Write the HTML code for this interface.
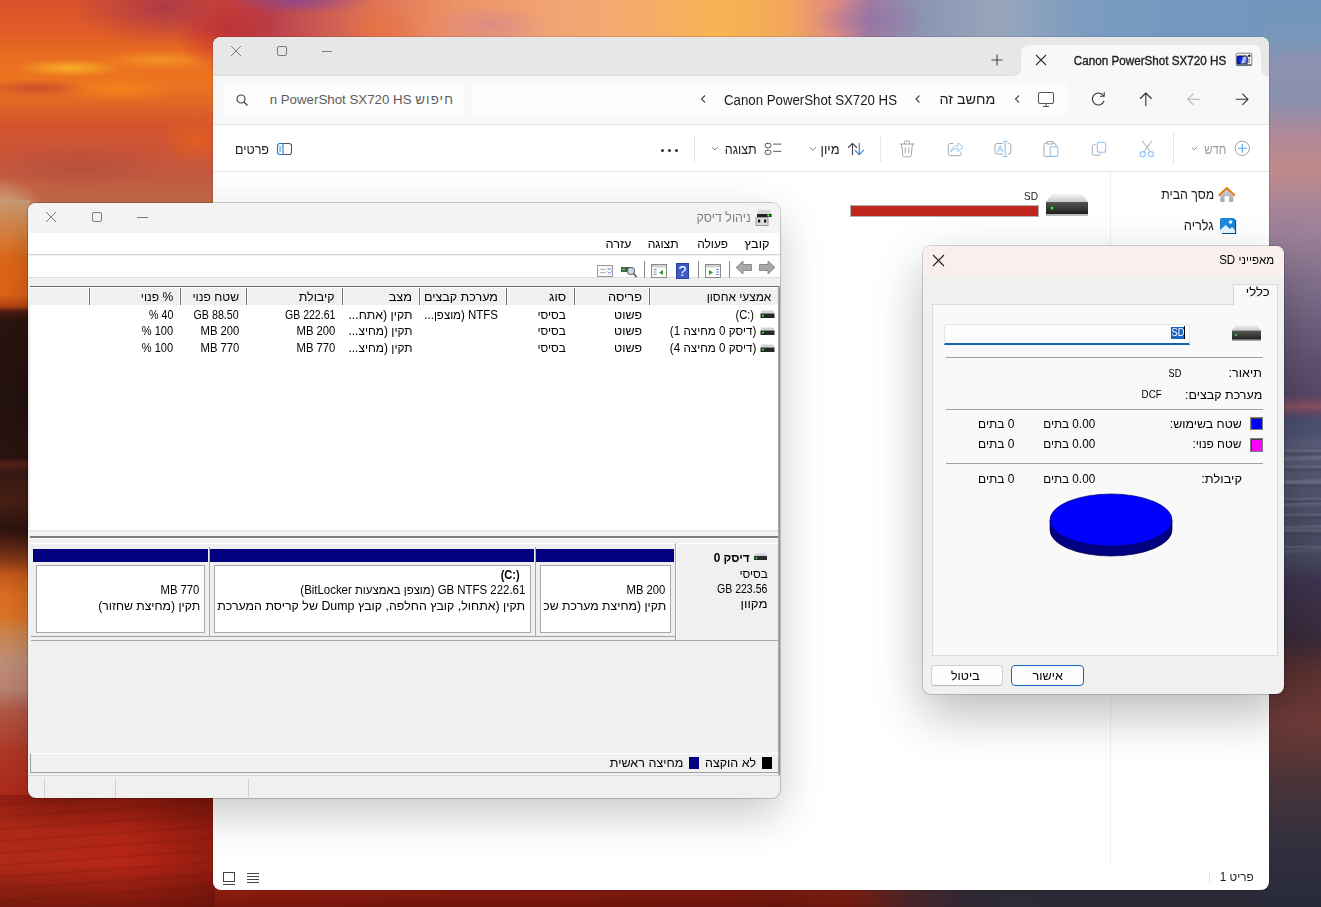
<!DOCTYPE html>
<html><head><meta charset="utf-8">
<style>
*{margin:0;padding:0;box-sizing:border-box}
html,body{width:1321px;height:907px;overflow:hidden;font-family:"Liberation Sans",sans-serif;color:#1a1a1a}
.a{position:absolute}
.t{position:absolute;white-space:nowrap;line-height:1}
.r{direction:rtl}
#bg{left:0;top:0;width:1321px;height:907px;overflow:hidden}
</style></head><body>
<div id="bg" class="a">
  <div class="a" style="left:0;top:0;width:1321px;height:907px;background:linear-gradient(90deg,#d85030 0px,#cc4434 150px,#c44238 215px,#b8404a 270px,#cc5a52 320px,#e07656 380px,#ec9468 460px,#f2a474 560px,#f4ac6c 640px,#f6b452 720px,#f2a65c 790px,#e08a80 835px,#a07aa0 870px,#8c94b2 920px,#98a6bc 1000px,#7c9cc0 1080px,#7298be 1200px,#7096be 1321px)"></div>
  <div class="a" style="left:0;top:0;width:1321px;height:40px;background:radial-gradient(ellipse 70px 12px at 300px 2px,rgba(130,70,160,.7),rgba(130,70,160,0)),radial-gradient(ellipse 60px 20px at 490px 25px,rgba(210,130,150,.6),rgba(210,130,150,0)),radial-gradient(ellipse 50px 30px at 230px 25px,rgba(190,40,50,.6),rgba(190,40,50,0)),radial-gradient(ellipse 40px 30px at 380px 30px,rgba(240,110,50,.5),rgba(240,110,50,0)),radial-gradient(ellipse 60px 20px at 870px 20px,rgba(140,110,170,.5),rgba(140,110,170,0))"></div>
  <!-- left sky -->
  <div class="a" style="left:0;top:0;width:215px;height:210px;background:radial-gradient(ellipse 90px 38px at 165px 8px,rgba(160,50,80,.75),rgba(160,50,80,0)),radial-gradient(ellipse 40px 40px at 215px 30px,rgba(195,45,50,.8),rgba(195,45,50,0)),radial-gradient(ellipse 55px 9px at 70px 68px,rgba(255,200,40,.7),rgba(255,200,40,0)),radial-gradient(ellipse 60px 10px at 160px 60px,rgba(255,175,40,.55),rgba(255,175,40,0)),radial-gradient(ellipse 60px 12px at 120px 90px,rgba(255,150,20,.5),rgba(255,150,20,0)),radial-gradient(ellipse 55px 9px at 35px 88px,rgba(175,55,50,.55),rgba(175,55,50,0)),radial-gradient(ellipse 35px 25px at 195px 140px,rgba(240,100,20,.55),rgba(240,100,20,0)),radial-gradient(ellipse 90px 22px at 80px 165px,rgba(165,70,60,.45),rgba(165,70,60,0)),radial-gradient(ellipse 45px 35px at 0px 212px,rgba(215,180,145,.95),rgba(215,180,145,0)),linear-gradient(180deg,#d8502e 0,#e25e26 35px,#ea7020 60px,#ec7420 80px,#e06626 105px,#d4542e 125px,#cc5436 150px,#c25a40 175px,#c46a48 200px,#c47450 210px)"></div>
  <!-- left strip -->
  <div class="a" style="left:0;top:200px;width:30px;height:600px;background:linear-gradient(180deg,#c89a78 0px,#cc9060 12px,#d8803c 35px,#e06818 60px,#e06418 95px,#b84414 106px,#4a1c12 112px,#2a140f 122px,#24120e 200px,#2c1410 258px,#5a2418 264px,#381a14 272px,#4a2014 300px,#2e1410 330px,#5a2414 345px,#8a3a16 360px,#c85a1c 375px,#e07020 395px,#e07424 415px,#d08850 435px,#c49078 460px,#bc8474 490px,#b45a48 510px,#b43a28 550px,#b02818 600px)"></div>
  <!-- bottom area -->
  <div class="a" style="left:0;top:795px;width:1321px;height:112px;background:linear-gradient(90deg,#b02a18 0px,#b82616 150px,#a82214 400px,#9a2012 700px,#8a2214 850px,#4a2a30 910px,#2e2a36 970px,#2a2a38 1321px)"></div>
  <div class="a" style="left:0;top:795px;width:1000px;height:112px;background:linear-gradient(180deg,rgba(90,10,5,.35) 0,rgba(0,0,0,0) 35px,rgba(0,0,0,0) 70px,rgba(60,8,4,.3) 95px,rgba(50,6,4,.45) 112px);-webkit-mask-image:linear-gradient(90deg,#000 780px,rgba(0,0,0,0) 1000px);mask-image:linear-gradient(90deg,#000 780px,rgba(0,0,0,0) 1000px)"></div>
  <div class="a" style="left:0;top:795px;width:215px;height:112px;background:linear-gradient(90deg,rgba(0,0,0,0) 120px,rgba(70,10,5,.3) 215px),repeating-linear-gradient(176deg,rgba(0,0,0,0) 0px,rgba(0,0,0,0) 8px,rgba(60,5,0,.12) 10px,rgba(0,0,0,0) 12px)"></div>
  <!-- right strip -->
  <div class="a" style="left:1262px;top:0;width:59px;height:907px;background:linear-gradient(180deg,#7196bd 0px,#7896b8 40px,#8c92b2 60px,#8890b0 100px,#b08898 135px,#c08a88 170px,#a88498 205px,#9a8098 235px,#7a6a88 300px,#625272 360px,#584868 395px,#8a5060 407px,#6a4a66 412px,#4a5070 420px,#505474 436px,#5a5a78 445px,#46485e 560px,#3e3450 580px,#3a2a3a 640px,#5a3030 670px,#6e3a38 720px,#5e3636 750px,#4a3438 780px,#33303e 840px,#282a38 907px)"></div>
  <div class="a" style="left:1262px;top:440px;width:59px;height:120px;background:repeating-linear-gradient(180deg,rgba(255,255,255,0) 0px,rgba(255,255,255,0) 9px,rgba(200,200,220,.18) 11px,rgba(30,30,50,.2) 13px,rgba(255,255,255,0) 16px),repeating-linear-gradient(178deg,rgba(255,255,255,0) 0px,rgba(255,255,255,0) 17px,rgba(220,220,235,.15) 19px,rgba(255,255,255,0) 23px)"></div>
</div>
<!-- EXPLORER -->
<div id="ex" class="a" style="left:213px;top:37px;width:1056px;height:853px;border-radius:8px;overflow:hidden;background:#fff;box-shadow:0 0 0 1px rgba(0,0,0,.10)">
  <div class="a" style="left:0;top:0;width:1056px;height:39px;background:#e7e7e7"></div>
  <div class="a" style="left:0;top:38px;width:1056px;height:49px;background:#f8f8f8;border-top:1px solid #dedede"></div>
  <div class="a" style="left:0;top:87px;width:1056px;height:1px;background:#e3e3e3"></div>
  <div class="a" style="left:0;top:134px;width:1056px;height:1px;background:#e6e6e6"></div>
  <!-- window controls -->
  <svg class="a" style="left:0;top:0" width="140" height="39"><g stroke="#7c7c7c" stroke-width="1" fill="none">
    <path d="M18 9 L28 19 M28 9 L18 19"/>
    <rect x="64.5" y="9.5" width="9" height="9" rx="1.5"/>
    <path d="M109 14.5 H119"/></g></svg>
  <!-- tab -->
  <div class="a" style="left:808px;top:8px;width:240px;height:32px;background:#f8f8f8;border-radius:8px 8px 0 0"></div>
  <div class="a" style="left:800px;top:31px;width:8px;height:8px;background:radial-gradient(circle at 0 0,#e7e7e7 8px,#f8f8f8 8.5px)"></div>
  <div class="a" style="left:1048px;top:31px;width:8px;height:8px;background:radial-gradient(circle at 8px 0,#e7e7e7 8px,#f8f8f8 8.5px)"></div>
  <svg class="a" style="left:1022px;top:15px" width="18" height="15"><defs><linearGradient id="camg" x1="0" y1="0" x2="1" y2="0.3"><stop offset="0" stop-color="#0010e0"/><stop offset="0.5" stop-color="#0a2ad8"/><stop offset="0.7" stop-color="#c8d0ff"/><stop offset="1" stop-color="#6a80f0"/></linearGradient></defs><rect x="1.2" y="1.2" width="15.6" height="12.4" rx="1.2" fill="#f2f2f2" stroke="#6a7688" stroke-width="0.9"/><rect x="2.2" y="4" width="10" height="8" rx="1" fill="url(#camg)" stroke="#111" stroke-width="1"/><rect x="13.3" y="2.8" width="2" height="2" fill="#000"/><path d="M14 6.5 V11" stroke="#777" stroke-width="1.2"/><rect x="1.5" y="12.2" width="15" height="1.5" fill="#5a6a80"/></svg>
  <div class="t" style="right:43px;top:18px;font-size:12.5px;color:#1c1c1c;-webkit-text-stroke:0.35px #1c1c1c;transform-origin:right;transform:scaleX(0.9339)">Canon PowerShot SX720 HS</div>
  <svg class="a" style="left:822px;top:17px" width="12" height="12"><path d="M1 1 L11 11 M11 1 L1 11" stroke="#333" stroke-width="1.1"/></svg>
  <svg class="a" style="left:778px;top:17px" width="12" height="12"><path d="M6 0.5 V11.5 M0.5 6 H11.5" stroke="#444" stroke-width="1.1"/></svg>
  <!-- nav buttons -->
  <svg class="a" style="left:860px;top:51.2px" width="180" height="22" fill="none" stroke-linecap="round" stroke-linejoin="round">
    <path d="M163.2 11.3 H175 M169.6 5.9 L175 11.3 L169.6 16.7" stroke="#333" stroke-width="1.1"/>
    <path d="M126.6 11.3 H114.8 M120.2 5.9 L114.8 11.3 L120.2 16.7" stroke="#b4b4b4" stroke-width="1.1"/>
    <path d="M72.8 17.4 V5 M67.3 10.5 L72.8 5 L78.3 10.5" stroke="#333" stroke-width="1.1"/>
    <path d="M30.3 7.6 A6 6 0 1 0 30.9 13.3" stroke="#333" stroke-width="1.1"/><path d="M31.2 4.6 V8.3 H27.5" stroke="#333" stroke-width="1.1"/>
  </svg>
  <!-- breadcrumb box -->
  <div class="a" style="left:259px;top:47px;width:596px;height:32px;background:#fdfdfd;border-radius:5px"></div>
  <svg class="a" style="left:824px;top:54px" width="19" height="17" fill="none" stroke="#555" stroke-width="1.1"><rect x="1.5" y="1.5" width="15" height="11" rx="1.5"/><path d="M6 15.5 H12 M9 12.5 V15.5"/></svg>
  <svg class="a" style="left:700px;top:56px" width="110" height="12" fill="none" stroke="#444" stroke-width="1.1"><path d="M106 2.5 L102.5 6 L106 9.5"/><path d="M6.5 2.5 L3 6 L6.5 9.5"/></svg>
  <svg class="a" style="left:480px;top:56px" width="20" height="12" fill="none" stroke="#444" stroke-width="1.1"><path d="M12 2.5 L8.5 6 L12 9.5"/></svg>
  <div class="t r" style="right:274px;top:55px;font-size:14px;color:#1c1c1c;transform-origin:right;transform:scaleX(1.0287)">מחשב זה</div>
  <div class="t" style="left:511px;top:56px;font-size:14px;color:#1c1c1c;transform-origin:left;transform:scaleX(0.9459)">Canon PowerShot SX720 HS</div>
  <!-- search box -->
  <div class="a" style="left:11px;top:47px;width:240px;height:32px;background:#fdfdfd;border-radius:5px;overflow:hidden">
    <div class="t r" style="right:10px;top:8.5px;font-size:13.3px;color:#5c5c5c"><span style="letter-spacing:1.1px">חיפוש</span> <span style="font-size:13.3px">Canon PowerShot SX720 HS</span></div>
    <div class="a" style="left:0;top:0;width:46px;height:32px;background:#fdfdfd"></div>
  </div>
  <svg class="a" style="left:23px;top:57px" width="13" height="12" fill="none" stroke="#444" stroke-width="1.2"><circle cx="5" cy="5" r="4"/><path d="M8 8 L11.5 11.5"/></svg>
  <!-- command bar -->
  <svg class="a" style="left:440px;top:95px" width="610" height="34" fill="none" stroke-linecap="round" stroke-linejoin="round">
    <circle cx="589.3" cy="16.3" r="7.2" stroke="#a0a0a0" stroke-width="1"/><path d="M589.3 12.3 V20.3 M585.3 16.3 H593.3" stroke="#5aa0e8" stroke-width="1.1"/>
    <path d="M539 15.5 L541.3 17.7 L543.6 15.5" stroke="#8a8a8a" stroke-width="1"/>
    <line x1="520.5" y1="1" x2="520.5" y2="32" stroke="#e6e6e6" stroke-linecap="butt"/>
    <path d="M489.5 9 L497.2 19.8 M498.8 9 L491 19.8" stroke="#a8a8a8" stroke-width="1"/><circle cx="489.7" cy="22.2" r="2.6" stroke="#90c4f2" stroke-width="1.1"/><circle cx="497.9" cy="22.2" r="2.6" stroke="#90c4f2" stroke-width="1.1"/>
    <rect x="444.3" y="10.2" width="8.4" height="10" rx="2" stroke="#90c4f2" stroke-width="1.1"/><path d="M442.5 12.8 A2 2 0 0 0 439.3 14.5 V21.3 A2 2 0 0 0 441.3 23.3 H446 A2 2 0 0 0 447.6 22" stroke="#a8a8a8" stroke-width="1"/>
    <path d="M394.5 11 H392.5 A1.5 1.5 0 0 0 391 12.5 V23 A1.5 1.5 0 0 0 392.5 24.5 H397 M400 11 H401.5 A1.5 1.5 0 0 0 403 12.5 V14.5 M394.5 9.5 H400 V12 H394.5 Z" stroke="#a8a8a8" stroke-width="1"/><rect x="397.2" y="14.8" width="7.6" height="9.6" rx="1.2" stroke="#90c4f2" stroke-width="1.1"/>
    <path d="M349.5 11.5 H344 A2 2 0 0 0 342 13.5 V20 A2 2 0 0 0 344 22 H349.5 M355 11.5 H355.8 A2 2 0 0 1 357.8 13.5 V20 A2 2 0 0 1 355.8 22 H355" stroke="#a8a8a8" stroke-width="1"/><path d="M352.2 9.3 V24.5 M350.2 9.3 H354.2 M350.2 24.5 H354.2" stroke="#90c4f2" stroke-width="1.1"/><path d="M344.6 20 L347.2 13.5 L349.8 20 M345.6 17.8 H348.8" stroke="#90c4f2" stroke-width="1"/>
    <path d="M300 11.5 H297.3 A2 2 0 0 0 295.3 13.5 V21.7 A2 2 0 0 0 297.3 23.7 H306 A2 2 0 0 0 308 21.7 V20" stroke="#a8a8a8" stroke-width="1"/><path d="M298 19.5 C298.8 15.5 301.5 13.8 305 13.8 V10.6 L310 15.2 L305 19.6 V16.6 C302 16.6 299.5 17.5 298 19.5 Z" stroke="#90c4f2" stroke-width="1"/>
    <path d="M246.8 12 H261 M251.5 12 V10 A1 1 0 0 1 252.5 9 H255.5 A1 1 0 0 1 256.5 10 V12 M248.5 12 L249.8 23.2 A1.8 1.8 0 0 0 251.6 24.8 H256.4 A1.8 1.8 0 0 0 258.2 23.2 L259.5 12 M252.3 15.8 V21 M255.7 15.8 V21" stroke="#a8a8a8" stroke-width="1"/>
    <line x1="227.5" y1="4" x2="227.5" y2="30" stroke="#e6e6e6" stroke-linecap="butt"/>
    <path d="M199.5 22.6 V11.3 M195.3 15.5 L199.5 11.3 L203.7 15.5" stroke="#444" stroke-width="1.1"/><path d="M206.3 11.3 V22.6 M202.1 18.4 L206.3 22.6 L210.5 18.4" stroke="#2a7fd8" stroke-width="1.1"/>
    <path d="M157 15.6 L159.8 18.3 L162.6 15.6" stroke="#777" stroke-width="1"/>
    <rect x="112" y="11.3" width="6" height="4.4" rx="2.2" stroke="#555" stroke-width="1"/><rect x="112" y="18.2" width="6" height="4.4" rx="2.2" stroke="#555" stroke-width="1"/><path d="M120.5 12.1 H128 M120.5 19.3 H128" stroke="#555" stroke-width="1"/>
    <path d="M59.3 15.5 L61.8 18 L64.3 15.5" stroke="#777" stroke-width="1"/>
    <line x1="41.5" y1="4" x2="41.5" y2="30" stroke="#e6e6e6" stroke-linecap="butt"/>
  </svg>
  <div class="a" style="left:448px;top:112px;width:3px;height:3px;border-radius:2px;background:#333"></div>
  <div class="a" style="left:455px;top:112px;width:3px;height:3px;border-radius:2px;background:#333"></div>
  <div class="a" style="left:462px;top:112px;width:3px;height:3px;border-radius:2px;background:#333"></div>
  <div class="t r" style="right:43px;top:105px;font-size:14px;color:#9a9a9a;transform-origin:right;transform:scaleX(0.8087)">חדש</div>
  <div class="t r" style="right:429px;top:105px;font-size:14px;color:#1c1c1c;transform-origin:right;transform:scaleX(0.9254)">מיון</div>
  <div class="t r" style="right:512px;top:105px;font-size:14px;color:#1c1c1c;transform-origin:right;transform:scaleX(0.8955)">תצוגה</div>
  <div class="t r" style="left:22px;top:105.5px;font-size:13.5px;color:#1c1c1c;transform-origin:left;transform:scaleX(0.9275)">פרטים</div>
  <svg class="a" style="left:63px;top:104px" width="18" height="16" fill="none"><path d="M7 2.5 H13 A2.5 2.5 0 0 1 15.5 5 V11 A2.5 2.5 0 0 1 13 13.5 H7" stroke="#555" stroke-width="1.1"/><path d="M7 2.5 H4 A2.5 2.5 0 0 0 1.5 5 V11 A2.5 2.5 0 0 0 4 13.5 H7 Z" stroke="#1a78d8" stroke-width="1.1"/><path d="M3.2 6 H5.2 M3.2 8 H5.2 M3.2 10 H5.2" stroke="#1a78d8" stroke-width="0.9"/></svg>
  <!-- nav pane -->
  <div class="a" style="left:897px;top:135px;width:1px;height:694px;background:#efefef"></div>
  <svg class="a" style="left:1004px;top:149px" width="20" height="17"><defs><linearGradient id="hb" x1="0" y1="0" x2="0" y2="1"><stop offset="0" stop-color="#d4d4d4"/><stop offset="1" stop-color="#a8a8a8"/></linearGradient></defs><path d="M3.2 8.2 L9.8 2.6 L16.4 8.2 V15 A1 1 0 0 1 15.4 16 H12 V11 A1 1 0 0 0 11 10 H8.6 A1 1 0 0 0 7.6 11 V16 H4.2 A1 1 0 0 1 3.2 15 Z" fill="url(#hb)"/><path d="M2.2 9.2 L9.8 2 L17.4 9.2" fill="none" stroke="#e8730c" stroke-width="1.8" stroke-linecap="round" stroke-linejoin="round"/></svg>
  <div class="t r" style="right:55px;top:150px;font-size:14px;color:#1c1c1c;transform-origin:right;transform:scaleX(0.8788)">מסך הבית</div>
  <svg class="a" style="left:1006px;top:180px" width="18" height="17"><rect x="1" y="1" width="15" height="15" rx="1.5" fill="#1e88d8"/><path d="M1 13 L6.5 8 L11 12 L13 10 L16 13 V16 H1 Z" fill="#e8f4ff"/><circle cx="11.5" cy="5" r="1.8" fill="#e8f4ff"/><path d="M16.5 3 V16.5 H3" stroke="#0b4f8a" stroke-width="1.2" fill="none"/></svg>
  <div class="t r" style="right:55px;top:181px;font-size:14px;color:#1c1c1c;transform-origin:right;transform:scaleX(0.9156)">גלריה</div>
  <!-- SD drive -->
  <svg class="a" style="left:832px;top:156px" width="44" height="24"><defs><linearGradient id="dtop" x1="0" y1="0" x2="0" y2="1"><stop offset="0" stop-color="#f4f4f4"/><stop offset="1" stop-color="#c8c8c8"/></linearGradient><linearGradient id="dbot" x1="0" y1="0" x2="0" y2="1"><stop offset="0" stop-color="#555"/><stop offset="1" stop-color="#1a1a1a"/></linearGradient></defs><path d="M7 1 H37 L43 9 H1 Z" fill="url(#dtop)"/><rect x="1" y="9" width="42" height="13" fill="url(#dbot)"/><rect x="1" y="21" width="42" height="2" fill="#bbb"/><circle cx="7" cy="15" r="1.5" fill="#3ce03c"/></svg>
  <div class="t" style="right:231px;top:153.5px;font-size:11.5px;color:#1c1c1c;transform-origin:right;transform:scaleX(0.8759)">SD</div>
  <div class="a" style="left:637px;top:168px;width:189px;height:12px;background:#c0281e;border:1px solid #b0b0b0"></div>
  <!-- status bar -->
  <svg class="a" style="left:9px;top:834px" width="40" height="15" fill="none" stroke="#444" stroke-width="1"><rect x="1.5" y="1.5" width="11" height="9"/><path d="M1 13.5 H13"/><path d="M25 2.5 H37 M25 5.5 H37 M25 8.5 H37 M25 11.5 H37"/></svg>
  <div class="a" style="left:996px;top:835px;width:1px;height:11px;background:#e5e5e5"></div>
  <div class="t r" style="right:15px;top:834px;font-size:12px;color:#1c1c1c;transform-origin:right;transform:scaleX(0.9797)">פריט 1</div>
</div>

<!-- DISK MGMT -->
<div id="dm" class="a" style="left:28px;top:203px;width:752px;height:595px;border-radius:8px;overflow:hidden;background:#f0f0f0;box-shadow:0 0 0 1px rgba(0,0,0,.18),0 16px 44px rgba(0,0,0,.22)">
  <div class="a" style="left:0;top:0;width:752px;height:30px;background:#f3f3f3"></div>
  <svg class="a" style="left:0;top:0" width="140" height="30"><g stroke="#7c7c7c" stroke-width="1" fill="none">
    <path d="M18 9 L28 19 M28 9 L18 19"/>
    <rect x="64.5" y="9.5" width="9" height="9" rx="1.5"/>
    <path d="M109 14.5 H120"/></g></svg>
  <svg class="a" style="left:727px;top:6px" width="18" height="18"><path d="M3.5 1 H15 L16.5 5 H2 Z" fill="#d4d8dc"/><rect x="2" y="5" width="14.5" height="3" fill="#222"/><circle cx="13.5" cy="6.5" r="1.2" fill="#3f3"/><rect x="1" y="8.5" width="12" height="8" fill="#dcdcdc" stroke="#8a8a8a" stroke-width="0.8"/><rect x="3" y="10.5" width="2.2" height="3" fill="#111"/><rect x="9" y="10.5" width="2.2" height="3" fill="#111"/></svg>
<div class="t r" style="right:29px;top:8.2px;font-size:13px;color:#808080;transform-origin:right;transform:scaleX(0.9558)">ניהול דיסק</div>
  <div class="a" style="left:0;top:30px;width:752px;height:22px;background:#fff;border-bottom:1px solid #d6d6d6"></div>
<div class="t r" style="right:10.4px;top:34.5px;font-size:12px;color:#000;transform-origin:right;transform:scaleX(1.0588)">קובץ</div>
<div class="t r" style="right:52px;top:34.5px;font-size:12px;color:#000;transform-origin:right;transform:scaleX(0.9950)">פעולה</div>
<div class="t r" style="right:101px;top:34.5px;font-size:12px;color:#000;transform-origin:right;transform:scaleX(1.0117)">תצוגה</div>
<div class="t r" style="right:148px;top:34.5px;font-size:12px;color:#000;transform-origin:right;transform:scaleX(1.0599)">עזרה</div>
  <div class="a" style="left:0;top:53px;width:752px;height:22px;background:#fff;border-bottom:1px solid #dedede"></div>
  <div class="a" style="left:0;top:76px;width:752px;height:7px;background:#f0f0f0"></div>
  <svg class="a" style="left:566px;top:56px" width="186" height="20">
    <path d="M181 8.5 L174 2 V5.5 H165.5 V11.5 H174 V15 Z" fill="#a8a8a8" stroke="#7a7a7a" stroke-width="0.8"/>
    <path d="M142 8.5 L149 2 V5.5 H157.5 V11.5 H149 V15 Z" fill="#a8a8a8" stroke="#7a7a7a" stroke-width="0.8"/>
    <line x1="135.5" y1="2" x2="135.5" y2="19" stroke="#8a8a8a"/>
    <rect x="111.5" y="5.5" width="15" height="13" fill="#fff" stroke="#8a8a8a"/><rect x="112" y="6" width="14" height="2.5" fill="#d0d0d0"/><path d="M115 11 L119 13.5 L115 16 Z" fill="#2a9a2a"/><path d="M122 10.5 H125 M122 13 H125 M122 15.5 H125" stroke="#6a8acc" stroke-width="1"/>
    <line x1="104.5" y1="2" x2="104.5" y2="19" stroke="#8a8a8a"/>
    <rect x="82" y="4" width="13" height="16" fill="#3a5cc8"/><rect x="82.5" y="4.5" width="12" height="15" fill="none" stroke="#2a3e9a"/><text x="88.5" y="17" font-family="Liberation Sans" font-size="14" fill="#fff" text-anchor="middle">?</text>
    <rect x="57.5" y="5.5" width="15" height="13" fill="#fff" stroke="#8a8a8a"/><rect x="58" y="6" width="14" height="2.5" fill="#d0d0d0"/><path d="M69 11 L65 13.5 L69 16 Z" fill="#2a9a2a"/><path d="M59.5 10.5 H62.5 M59.5 13 H62.5 M59.5 15.5 H62.5" stroke="#6a8acc" stroke-width="1"/>
    <line x1="50.5" y1="2" x2="50.5" y2="19" stroke="#8a8a8a"/>
    <rect x="27" y="8" width="11" height="5" fill="#555"/><rect x="28" y="9.5" width="3" height="2" fill="#3c3"/><circle cx="37" cy="12" r="3.5" fill="#c4dcf0" stroke="#6b6b6b" stroke-width="1.1"/><path d="M39.5 14.5 L42.5 18" stroke="#555" stroke-width="1.6"/>
    <rect x="3.5" y="6.5" width="15" height="11" fill="#fafafa" stroke="#9a9a9a"/><path d="M6 10.5 H12 M6 13.5 H12" stroke="#b8b8b8"/><path d="M13.5 9 L15.5 11 L17.5 9 M13.5 12.5 L15.5 14.5 L17.5 12.5" stroke="#4a7acc" fill="none" stroke-width="0.9"/>
  </svg>
  <div class="a" style="left:2px;top:83px;width:748px;height:20px;background:#f0f0f0;border-top:1px solid #6a6a6a;border-bottom:1px solid #6a6a6a;box-shadow:inset 0 1px 0 #fff"></div>
  <div class="a" style="left:60px;top:85px;width:3px;height:17px;background:linear-gradient(90deg,#fff 0,#fff 1px,#6a6a6a 1px,#6a6a6a 2px,#fff 2px)"></div>
  <div class="a" style="left:150.7px;top:85px;width:3px;height:17px;background:linear-gradient(90deg,#fff 0,#fff 1px,#6a6a6a 1px,#6a6a6a 2px,#fff 2px)"></div>
  <div class="a" style="left:217.4px;top:85px;width:3px;height:17px;background:linear-gradient(90deg,#fff 0,#fff 1px,#6a6a6a 1px,#6a6a6a 2px,#fff 2px)"></div>
  <div class="a" style="left:313px;top:85px;width:3px;height:17px;background:linear-gradient(90deg,#fff 0,#fff 1px,#6a6a6a 1px,#6a6a6a 2px,#fff 2px)"></div>
  <div class="a" style="left:390px;top:85px;width:3px;height:17px;background:linear-gradient(90deg,#fff 0,#fff 1px,#6a6a6a 1px,#6a6a6a 2px,#fff 2px)"></div>
  <div class="a" style="left:476.5px;top:85px;width:3px;height:17px;background:linear-gradient(90deg,#fff 0,#fff 1px,#6a6a6a 1px,#6a6a6a 2px,#fff 2px)"></div>
  <div class="a" style="left:545px;top:85px;width:3px;height:17px;background:linear-gradient(90deg,#fff 0,#fff 1px,#6a6a6a 1px,#6a6a6a 2px,#fff 2px)"></div>
  <div class="a" style="left:620px;top:85px;width:3px;height:17px;background:linear-gradient(90deg,#fff 0,#fff 1px,#6a6a6a 1px,#6a6a6a 2px,#fff 2px)"></div>
<div class="t r" style="right:9px;top:87.8px;font-size:12px;color:#000;transform-origin:right;transform:scaleX(0.9893)">אמצעי אחסון</div>
<div class="t r" style="right:138px;top:87.8px;font-size:12px;color:#000;transform-origin:right;transform:scaleX(1.0635)">פריסה</div>
<div class="t r" style="right:214px;top:87.8px;font-size:12px;color:#000;transform-origin:right;transform:scaleX(1.0584)">סוג</div>
<div class="t r" style="right:282px;top:87.8px;font-size:12px;color:#000;transform-origin:right;transform:scaleX(1.0436)">מערכת קבצים</div>
<div class="t r" style="right:368px;top:87.8px;font-size:12px;color:#000;transform-origin:right;transform:scaleX(1.0606)">מצב</div>
<div class="t r" style="right:445px;top:87.8px;font-size:12px;color:#000;transform-origin:right;transform:scaleX(1.0383)">קיבולת</div>
<div class="t r" style="right:541px;top:87.8px;font-size:12px;color:#000;transform-origin:right;transform:scaleX(1.0117)">שטח פנוי</div>
<div class="t r" style="right:607px;top:87.8px;font-size:12px;color:#000;transform-origin:right;transform:scaleX(1.0082)">% פנוי</div>
  <div class="a" style="left:2px;top:102px;width:748px;height:225px;background:#fff"></div>
  <svg class="a" style="left:732px;top:107.0px" width="16" height="10"><path d="M1.5 0.5 H13.5 L14.5 3.5 H0.5 Z" fill="#cfd3d8"/><rect x="0.5" y="3.5" width="14" height="4.5" fill="#262626"/><circle cx="3" cy="5.7" r="1.1" fill="#2fe02f"/></svg>
<div class="t" style="right:26.5px;top:105.8px;font-size:12px;color:#000;transform-origin:right;transform:scaleX(0.9250)">(C:)</div>
<div class="t r" style="right:138px;top:105.8px;font-size:12px;color:#000;transform-origin:right;transform:scaleX(1.0358)">פשוט</div>
<div class="t r" style="right:214px;top:105.8px;font-size:12px;color:#000;transform-origin:right;transform:scaleX(0.9854)">בסיסי</div>
<div class="t r" style="right:282px;top:105.8px;font-size:12px;color:#000;transform-origin:right;transform:scaleX(0.9569)">NTFS (מוצפן...</div>
<div class="t r" style="right:368px;top:105.8px;font-size:12px;color:#000;transform-origin:right;transform:scaleX(1.0253)">תקין (אתח...</div>
<div class="t r" style="right:445px;top:105.8px;font-size:12px;color:#000;transform-origin:right;transform:scaleX(0.8784)">GB 222.61</div>
<div class="t r" style="right:541px;top:105.8px;font-size:12px;color:#000;transform-origin:right;transform:scaleX(0.8915)">GB 88.50</div>
<div class="t r" style="right:607px;top:105.8px;font-size:12px;color:#000;transform-origin:right;transform:scaleX(0.8877)">40 %</div>
  <svg class="a" style="left:732px;top:123.6px" width="16" height="10"><path d="M1.5 0.5 H13.5 L14.5 3.5 H0.5 Z" fill="#cfd3d8"/><rect x="0.5" y="3.5" width="14" height="4.5" fill="#262626"/><circle cx="3" cy="5.7" r="1.1" fill="#2fe02f"/></svg>
<div class="t r" style="right:23.5px;top:122.4px;font-size:12px;color:#000;transform-origin:right;transform:scaleX(0.9679)">(דיסק 0 מחיצה 1)</div>
<div class="t r" style="right:138px;top:122.4px;font-size:12px;color:#000;transform-origin:right;transform:scaleX(1.0358)">פשוט</div>
<div class="t r" style="right:214px;top:122.4px;font-size:12px;color:#000;transform-origin:right;transform:scaleX(0.9854)">בסיסי</div>
<div class="t r" style="right:368px;top:122.4px;font-size:12px;color:#000;transform-origin:right;transform:scaleX(0.9922)">תקין (מחיצ...</div>
<div class="t r" style="right:445px;top:122.4px;font-size:12px;color:#000;transform-origin:right;transform:scaleX(0.9381)">MB 200</div>
<div class="t r" style="right:541px;top:122.4px;font-size:12px;color:#000;transform-origin:right;transform:scaleX(0.9381)">MB 200</div>
<div class="t r" style="right:607px;top:122.4px;font-size:12px;color:#000;transform-origin:right;transform:scaleX(0.9193)">100 %</div>
  <svg class="a" style="left:732px;top:140.6px" width="16" height="10"><path d="M1.5 0.5 H13.5 L14.5 3.5 H0.5 Z" fill="#cfd3d8"/><rect x="0.5" y="3.5" width="14" height="4.5" fill="#262626"/><circle cx="3" cy="5.7" r="1.1" fill="#2fe02f"/></svg>
<div class="t r" style="right:23.5px;top:139.4px;font-size:12px;color:#000;transform-origin:right;transform:scaleX(0.9679)">(דיסק 0 מחיצה 4)</div>
<div class="t r" style="right:138px;top:139.4px;font-size:12px;color:#000;transform-origin:right;transform:scaleX(1.0358)">פשוט</div>
<div class="t r" style="right:214px;top:139.4px;font-size:12px;color:#000;transform-origin:right;transform:scaleX(0.9854)">בסיסי</div>
<div class="t r" style="right:368px;top:139.4px;font-size:12px;color:#000;transform-origin:right;transform:scaleX(0.9922)">תקין (מחיצ...</div>
<div class="t r" style="right:445px;top:139.4px;font-size:12px;color:#000;transform-origin:right;transform:scaleX(0.9381)">MB 770</div>
<div class="t r" style="right:541px;top:139.4px;font-size:12px;color:#000;transform-origin:right;transform:scaleX(0.9381)">MB 770</div>
<div class="t r" style="right:607px;top:139.4px;font-size:12px;color:#000;transform-origin:right;transform:scaleX(0.9193)">100 %</div>
  <div class="a" style="left:2px;top:327px;width:748px;height:2px;background:#e8e8e8"></div>
  <div class="a" style="left:2px;top:329px;width:748px;height:4px;background:#f4f4f4"></div>
  <div class="a" style="left:2px;top:333px;width:748px;height:2px;background:#7a7a7a"></div>
  <div class="a" style="left:2px;top:335px;width:748px;height:1px;background:#fff"></div>
  <div class="a" style="left:3px;top:340px;width:645px;height:98px;border-top:1px solid #fff;border-bottom:1px solid #a8a8a8"></div>
  <div class="a" style="left:3px;top:433px;width:645px;height:1px;background:#a0a0a0"></div>
  <div class="a" style="left:647px;top:340px;width:103px;height:98px;background:#f0f0f0;border-left:1px solid #a8a8a8;border-bottom:1px solid #a8a8a8;box-shadow:inset 1px 1px 0 #fff"></div>
  <div class="a" style="left:750px;top:83px;width:2.6px;height:490px;background:linear-gradient(90deg,#b0b0b0,#7a7a7a)"></div>
  <div class="a" style="left:751.5px;top:30px;width:1px;height:53px;background:#c4c4c4"></div>
  <div class="a" style="left:4.7px;top:345.8px;width:175.7px;height:13px;background:#000080"></div>
  <div class="a" style="left:8.2px;top:362px;width:169.2px;height:68px;background:#fff;border:1px solid #a8a8a8;overflow:hidden"></div>
  <div class="a" style="left:182.4px;top:345.8px;width:323.6px;height:13px;background:#000080"></div>
  <div class="a" style="left:185.9px;top:362px;width:317.1px;height:68px;background:#fff;border:1px solid #a8a8a8;overflow:hidden"></div>
  <div class="a" style="left:508.4px;top:345.8px;width:137.6px;height:13px;background:#000080"></div>
  <div class="a" style="left:511.9px;top:362px;width:131.1px;height:68px;background:#fff;border:1px solid #a8a8a8;overflow:hidden"></div>
  <div class="a" style="left:181.0px;top:344px;width:1px;height:90px;background:#a8a8a8"></div>
  <div class="a" style="left:506.9px;top:344px;width:1px;height:90px;background:#a8a8a8"></div>
  <div class="a" style="left:512px;top:363px;width:130px;height:66px;overflow:hidden">
  <div class="t r" style="right:4.2px;top:18.3px;font-size:12px;color:#000;transform-origin:right;transform:scaleX(0.9381)">MB 200</div>
  <div class="t r" style="right:4.2px;top:33.8px;font-size:12px;color:#000;transform-origin:right;transform:scaleX(1.0227)">תקין (מחיצת מערכת שכ</div>
  </div>
<div class="t" style="right:260.6px;top:366.2px;font-size:12px;color:#000;font-weight:bold;transform-origin:right;transform:scaleX(0.9198)">(C:)</div>
<div class="t r" style="right:255px;top:381.3px;font-size:12px;color:#000;transform-origin:right;transform:scaleX(0.9521)">GB NTFS 222.61 (מוצפן באמצעות BitLocker)</div>
<div class="t r" style="right:255px;top:396.8px;font-size:12px;color:#000;transform-origin:right;transform:scaleX(1.0329)">תקין (אתחול, קובץ החלפה, קובץ Dump של קריסת המערכת</div>
<div class="t r" style="right:580.2px;top:381.3px;font-size:12px;color:#000;transform-origin:right;transform:scaleX(0.9381)">MB 770</div>
<div class="t r" style="right:580.2px;top:396.5px;font-size:12px;color:#000;transform-origin:right;transform:scaleX(1.0181)">תקין (מחיצת שחזור)</div>
<div class="t r" style="right:30.299999999999955px;top:348.7px;font-size:12px;color:#000;font-weight:bold;transform-origin:right;transform:scaleX(0.9829)">דיסק 0</div>
  <svg class="a" style="left:725.5px;top:350px" width="14" height="9"><path d="M1 0.5 H12 L13 3 H0 Z" fill="#cfd3d8"/><rect x="0" y="3" width="13" height="4" fill="#2a2a2a"/><circle cx="2.3" cy="5" r="1" fill="#2fe02f"/></svg>
<div class="t r" style="right:12.200000000000045px;top:364.8px;font-size:12px;color:#000;transform-origin:right;transform:scaleX(0.9854)">בסיסי</div>
<div class="t r" style="right:12.200000000000045px;top:379.8px;font-size:12px;color:#000;transform-origin:right;transform:scaleX(0.8784)">GB 223.56</div>
<div class="t r" style="right:12.200000000000045px;top:395.3px;font-size:12px;color:#000;transform-origin:right;transform:scaleX(1.0992)">מקוון</div>
  <div class="a" style="left:2px;top:550px;width:749px;height:20px;background:#f0f0f0;border-top:1px solid #fff;border-left:1px solid #a0a0a0;border-bottom:1px solid #a0a0a0;border-right:1px solid #a0a0a0"></div>
  <div class="a" style="left:734px;top:554px;width:10.4px;height:12px;background:#000"></div>
  <div class="a" style="left:661px;top:554px;width:10px;height:12px;background:#000080"></div>
<div class="t r" style="right:24.299999999999955px;top:553.8px;font-size:12px;color:#000;transform-origin:right;transform:scaleX(1.0412)">לא הוקצה</div>
<div class="t r" style="right:96.70000000000005px;top:553.8px;font-size:12px;color:#000;transform-origin:right;transform:scaleX(1.0458)">מחיצה ראשית</div>
  <div class="a" style="left:0;top:572px;width:752px;height:1px;background:#d8d8d8"></div>
  <div class="a" style="left:16px;top:575px;width:1px;height:20px;background:#d0d0d0"></div>
  <div class="a" style="left:87px;top:575px;width:1px;height:20px;background:#d0d0d0"></div>
  <div class="a" style="left:220px;top:575px;width:1px;height:20px;background:#d0d0d0"></div>
</div>

<!-- DIALOG -->
<div id="dl" class="a" style="left:923px;top:246px;width:361px;height:448px;border-radius:8px;overflow:hidden;background:#f0f0f0;box-shadow:0 0 0 1px rgba(0,0,0,.16),0 20px 50px rgba(0,0,0,.27)">
  <div class="a" style="left:0;top:0;width:361px;height:30px;background:#f9efed"></div>
  <svg class="a" style="left:9px;top:8px" width="13" height="13"><path d="M1 1 L12 12 M12 1 L1 12" stroke="#222" stroke-width="1.1"/></svg>
  <div class="t r" style="right:10.0px;top:8.2px;font-size:12px;color:#000;transform-origin:right;transform:scaleX(0.9628)">מאפייני SD</div>
  <div class="a" style="left:8.5px;top:58px;width:346px;height:352px;background:#f9f9f9;border:1px solid #dadada"></div>
  <div class="a" style="left:309.5px;top:37.5px;width:45px;height:21.5px;background:#f9f9f9;border:1px solid #dadada;border-bottom:none"></div>
  <div class="t r" style="right:14.2px;top:40.3px;font-size:12px;color:#000;transform-origin:right;transform:scaleX(1.1065)">כללי</div>
  <div class="a" style="left:21px;top:77.7px;width:246px;height:21.5px;background:#fdfdfd;border:1px solid #e4e4e4;border-bottom:2px solid #1660b8;border-radius:3px 3px 0 0"></div>
  <div class="a" style="left:247.5px;top:80.5px;width:14px;height:12.5px;background:#1a63c6"></div>
  <div class="t" style="right:99.4px;top:81.4px;font-size:11px;color:#fff;transform-origin:right;transform:scaleX(0.8376)">SD</div>
  <div class="a" style="left:261px;top:80px;width:1px;height:13px;background:#000"></div>
  <svg class="a" style="left:308px;top:78px" width="31" height="18"><defs><linearGradient id="d2t" x1="0" y1="0" x2="0" y2="1"><stop offset="0" stop-color="#f2f2f2"/><stop offset="1" stop-color="#cacaca"/></linearGradient><linearGradient id="d2b" x1="0" y1="0" x2="0" y2="1"><stop offset="0" stop-color="#5a5a5a"/><stop offset="1" stop-color="#1e1e1e"/></linearGradient></defs><path d="M5 1 H26 L30 6.5 H1 Z" fill="url(#d2t)"/><rect x="1" y="6.5" width="29" height="9.5" fill="url(#d2b)"/><rect x="1" y="15.5" width="29" height="1.5" fill="#aaa"/><circle cx="5" cy="11" r="1.1" fill="#3ce03c"/></svg>
  <div class="a" style="left:22.7px;top:110.5px;width:317px;height:1px;background:#a0a0a0"></div>
  <div class="a" style="left:22.7px;top:163px;width:317px;height:1px;background:#a0a0a0"></div>
  <div class="a" style="left:22.7px;top:217px;width:317px;height:1px;background:#a0a0a0"></div>
  <div class="t r" style="right:22.0px;top:121.2px;font-size:12px;color:#000;transform-origin:right;transform:scaleX(1.0436)">תיאור:</div>
  <div class="t" style="right:103.0px;top:121.8px;font-size:11px;color:#000;transform-origin:right;transform:scaleX(0.8376)">SD</div>
  <div class="t r" style="right:22.0px;top:142.5px;font-size:12px;color:#000;transform-origin:right;transform:scaleX(1.0399)">מערכת קבצים:</div>
  <div class="t" style="right:122.0px;top:143.1px;font-size:11px;color:#000;transform-origin:right;transform:scaleX(0.8846)">DCF</div>
  <div class="a" style="left:326.7px;top:171px;width:13.3px;height:13.4px;background:#0000fe;border:1px solid #808080;box-shadow:inset 1px 1px 0 #404040"></div>
  <div class="a" style="left:326.7px;top:192.4px;width:13.3px;height:13.2px;background:#fe00fe;border:1px solid #808080;box-shadow:inset 1px 1px 0 #404040"></div>
  <div class="t r" style="right:42.3px;top:171.6px;font-size:12px;color:#000;transform-origin:right;transform:scaleX(1.0306)">שטח בשימוש:</div>
  <div class="t r" style="right:189.0px;top:171.6px;font-size:12px;color:#000;transform-origin:right;transform:scaleX(0.9777)">0.00 בתים</div>
  <div class="t r" style="right:269.0px;top:171.6px;font-size:12px;color:#000;transform-origin:right;transform:scaleX(0.9968)">0 בתים</div>
  <div class="t r" style="right:42.3px;top:192.4px;font-size:12px;color:#000;transform-origin:right;transform:scaleX(0.9921)">שטח פנוי:</div>
  <div class="t r" style="right:189.0px;top:192.4px;font-size:12px;color:#000;transform-origin:right;transform:scaleX(0.9777)">0.00 בתים</div>
  <div class="t r" style="right:269.0px;top:192.4px;font-size:12px;color:#000;transform-origin:right;transform:scaleX(0.9968)">0 בתים</div>
  <div class="t r" style="right:42.3px;top:226.5px;font-size:12px;color:#000;transform-origin:right;transform:scaleX(1.0711)">קיבולת:</div>
  <div class="t r" style="right:189.0px;top:226.5px;font-size:12px;color:#000;transform-origin:right;transform:scaleX(0.9777)">0.00 בתים</div>
  <div class="t r" style="right:269.0px;top:226.5px;font-size:12px;color:#000;transform-origin:right;transform:scaleX(0.9968)">0 בתים</div>
  <svg class="a" style="left:125px;top:246px" width="126" height="66"><path d="M2 28 V38 A61 26 0 0 0 124 38 V28 Z" fill="#000080" stroke="#00004a" stroke-width="0.7"/><ellipse cx="63" cy="28" rx="61" ry="26" fill="#0000fe" stroke="#00006a" stroke-width="0.7"/></svg>
  <div class="a" style="left:7.5px;top:419.2px;width:72px;height:20.5px;background:#fdfdfd;border:1px solid #d0d0d0;border-bottom-color:#b8b8b8;border-radius:4px"></div>
  <div class="a" style="left:88px;top:419.2px;width:72.7px;height:20.5px;background:#fdfdfd;border:1px solid #1a63c6;border-radius:4px"></div>
  <div class="t r" style="right:304.0px;top:424.3px;font-size:12px;color:#000;transform-origin:right;transform:scaleX(1.0359)">ביטול</div>
  <div class="t r" style="right:221.2px;top:424.3px;font-size:12px;color:#000;transform-origin:right;transform:scaleX(1.0500)">אישור</div>
</div>

</body></html>
